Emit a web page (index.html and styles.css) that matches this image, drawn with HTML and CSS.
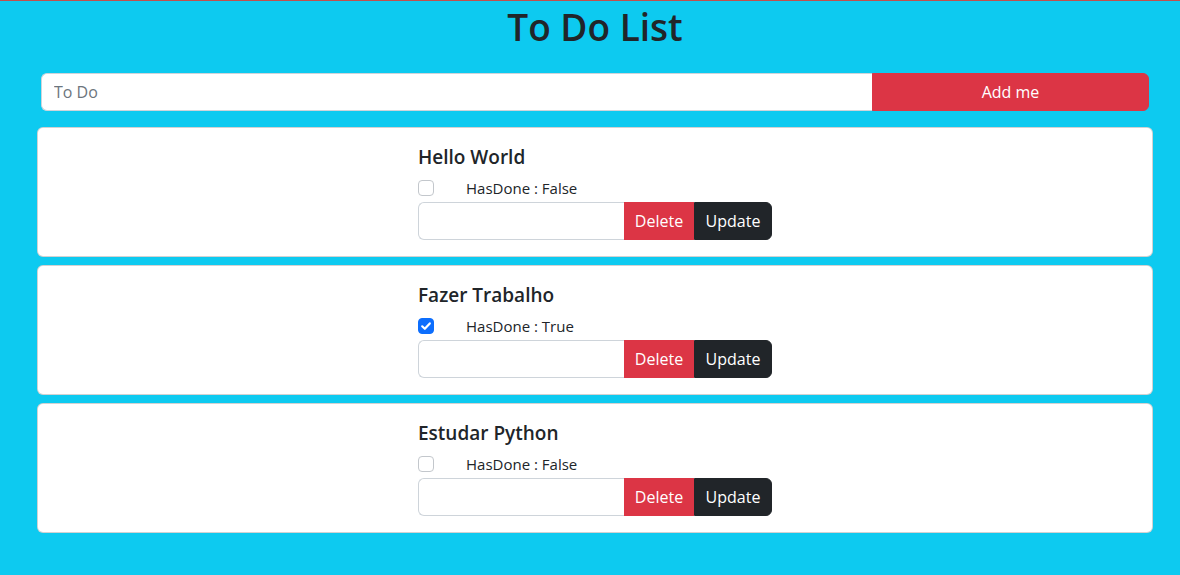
FILE: index.html
```html
<!DOCTYPE html>
<html lang="pt">
<head>
<meta charset="utf-8">
<title>To Do List</title>
<link rel="stylesheet" href="styles.css">
</head>
<body>
<div class="page">
  <h1 class="title">To Do List</h1>
  <form class="add-group">
    <input class="add-input" type="text" placeholder="To Do">
    <button class="btn btn-danger add-btn" type="button">Add me</button>
  </form>
  <div class="list">
    <div class="card">
      <div class="card-body">
        <h5 class="card-title">Hello World</h5>
        <div class="status">
          <span class="check"></span>
          <span class="status-text">HasDone : False</span>
        </div>
        <div class="edit-group">
          <input class="edit-input" type="text">
          <button class="btn btn-danger" type="button">Delete</button>
          <button class="btn btn-dark last" type="button">Update</button>
        </div>
      </div>
    </div>
    <div class="card">
      <div class="card-body">
        <h5 class="card-title">Fazer Trabalho</h5>
        <div class="status">
          <span class="check checked"><svg viewBox="0 0 16 16" width="16" height="16"><path d="M4.2 8.3l2.6 2.5 5-5.4" fill="none" stroke="#fff" stroke-width="2.2" stroke-linecap="round" stroke-linejoin="round"/></svg></span>
          <span class="status-text">HasDone : True</span>
        </div>
        <div class="edit-group">
          <input class="edit-input" type="text">
          <button class="btn btn-danger" type="button">Delete</button>
          <button class="btn btn-dark last" type="button">Update</button>
        </div>
      </div>
    </div>
    <div class="card">
      <div class="card-body">
        <h5 class="card-title">Estudar Python</h5>
        <div class="status">
          <span class="check"></span>
          <span class="status-text">HasDone : False</span>
        </div>
        <div class="edit-group">
          <input class="edit-input" type="text">
          <button class="btn btn-danger" type="button">Delete</button>
          <button class="btn btn-dark last" type="button">Update</button>
        </div>
      </div>
    </div>
  </div>
</div>
</body>
</html>
```

FILE: styles.css
```css
* { box-sizing: border-box; }
html, body {
  margin: 0;
  padding: 0;
  height: 100%;
}
body {
  background: #0dcaf0;
  color: #212529;
  font-family: "Segoe UI", "Open Sans", "Noto Sans", sans-serif;
  font-size: 16px;
  line-height: 1.5;
  border-top: 1px solid #c0504d;
}
.page {
  padding: 0 27px 0 37px;
}
.title {
  margin: 0;
  padding-top: 3px;
  text-align: center;
  font-size: 37px;
  font-weight: 600;
  line-height: 46px;
}
.add-group {
  display: flex;
  margin: 23px 4px 16px 4px;
  height: 38px;
}
.add-input {
  flex: 1;
  border: 1px solid #ced4da;
  border-right: none;
  border-radius: 6px 0 0 6px;
  padding: 6px 12px;
  font: inherit;
  font-size: 16px;
  color: #212529;
  background: #fff;
  outline: none;
}
.add-input::placeholder { color: #6c757d; }
.btn {
  font: inherit;
  font-size: 16px;
  line-height: 24px;
  padding: 6px 12px;
  border: 1px solid transparent;
  color: #fff;
  cursor: pointer;
}
.btn-danger { background: #dc3545; border-color: #dc3545; }
.btn-dark { background: #212529; border-color: #212529; }
.add-btn {
  width: 277px;
  border-radius: 0 6px 6px 0;
}
.list {
  display: flex;
  flex-direction: column;
  gap: 8px;
  width: 1116px;
}
.card {
  background: #fff;
  border: 1px solid rgba(0,0,0,0.175);
  border-radius: 6px;
}
.card-body {
  padding: 17px 16px 16px 380px;
}
.card-title {
  margin: 0 0 7px 0;
  font-size: 19px;
  font-weight: 600;
  line-height: 24px;
}
.status {
  display: flex;
  align-items: center;
  height: 24px;
  margin-bottom: 2px;
}
.check {
  width: 16px;
  height: 16px;
  border: 1px solid #c3c7cc;
  border-radius: 4px;
  background: #fff;
  display: inline-flex;
}
.check.checked {
  background: #0d6efd;
  border-color: #0d6efd;
}
.check svg { margin: -1px; }
.status-text {
  margin-left: 32px;
  font-size: 15px;
}
.edit-group {
  display: flex;
  height: 38px;
}
.edit-input {
  width: 206px;
  border: 1px solid #ced4da;
  border-right: none;
  border-radius: 6px 0 0 6px;
  padding: 6px 12px;
  font: inherit;
  background: #fff;
  outline: none;
}
.edit-group .btn { border-radius: 0; }
.edit-group .btn-danger { width: 70px; padding: 6px 0; }
.edit-group .btn.last { width: 78px; padding: 6px 0; border-radius: 0 6px 6px 0; }
```
